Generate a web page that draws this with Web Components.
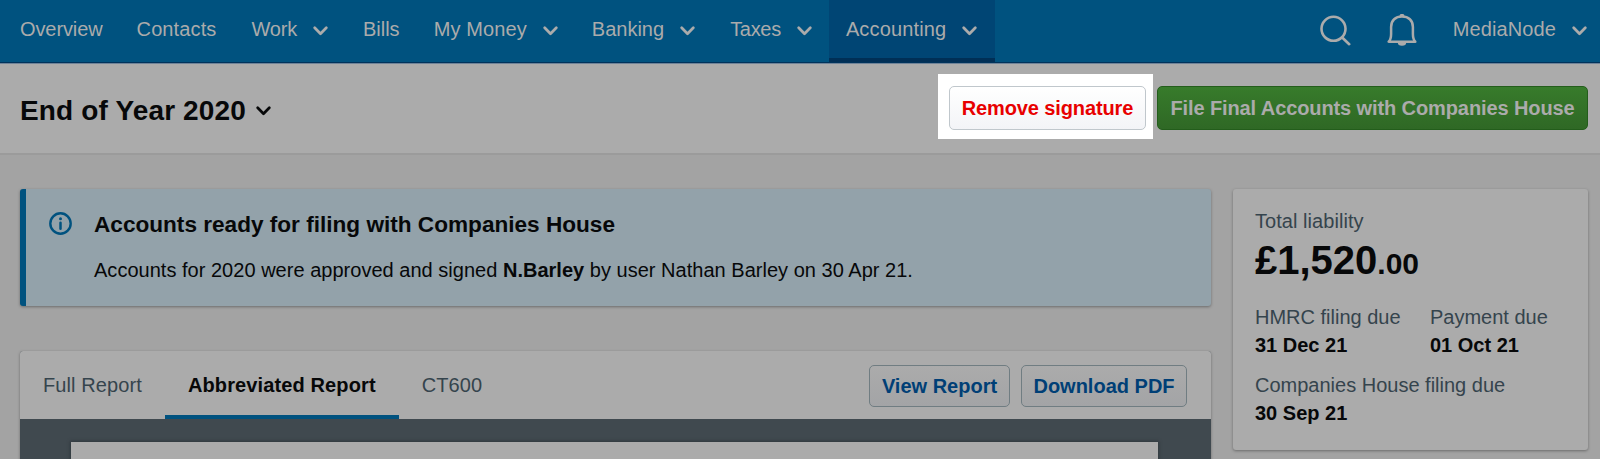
<!DOCTYPE html>
<html lang="en">
<head>
<meta charset="utf-8">
<title>End of Year 2020</title>
<style>
    html, body {
        margin: 0;
        height: 459px;
        overflow: hidden;
        background: #a3a3a3;
        font-family: "Liberation Sans", Arial, sans-serif;
        font-size: 20px;
        color: #070809;
    }
</style>
</head>
<body>
<accounts-page></accounts-page>

<script>
    class ChevronIcon extends HTMLElement {
        constructor() {
            super();
            this.attachShadow({ mode: 'open' }).innerHTML = `
                <style>
                    :host { display: block; flex: none; width: 15px; height: 10px; }
                    svg { display: block; }
                </style>
                <svg width="15" height="10" viewBox="0 0 15 10" fill="none" stroke="currentColor" stroke-width="2.7" stroke-linecap="round" stroke-linejoin="round">
                    <path d="M1.7 1.7 7.5 7.7 13.3 1.7"/>
                </svg>
            `;
        }
    }

    class NavItem extends HTMLElement {
        constructor() {
            super();
            this.attachShadow({ mode: 'open' }).innerHTML = `
                <style>
                    :host {
                        display: flex;
                        align-items: center;
                        box-sizing: border-box;
                        height: 62px;
                        padding: 0 17px;
                        white-space: nowrap;
                    }
                    :host([active]) {
                        background: #004574;
                        box-shadow: inset 0 -4px #002f56;
                    }
                    span { line-height: 24px; margin-top: -4px; }
                    chevron-icon { margin: 0 0 0 16px; }
                    :host(:not([menu])) chevron-icon { display: none; }
                </style>
                <span><slot></slot></span>
                <chevron-icon></chevron-icon>
            `;
        }
    }

    class NavBar extends HTMLElement {
        constructor() {
            super();
            this.attachShadow({ mode: 'open' }).innerHTML = `
                <style>
                    :host {
                        display: flex;
                        justify-content: space-between;
                        box-sizing: border-box;
                        height: 64px;
                        padding: 0 13px 0 3px;
                        background: #00527f;
                        border-bottom: 1px solid #6f8398;
                        box-shadow: inset 0 -1px #00335b;
                        color: #ababab;
                    }
                    nav, .tools { display: flex; }
                    .tools svg { display: block; margin-top: 14px; }
                    .bell { margin-left: 35px; }
                    slot[name="account"]::slotted(*) { margin-left: 19px; padding-right: 0; }
                </style>
                <nav><slot></slot></nav>
                <div class="tools">
                    <svg width="32" height="32" viewBox="0 0 32 32" fill="none" stroke="currentColor" stroke-width="2.6" stroke-linecap="round">
                        <circle cx="13.5" cy="14.8" r="12"/>
                        <path d="m22.2 23.5 7 6.7"/>
                    </svg>
                    <svg class="bell" width="30" height="32" viewBox="0 0 30 32" fill="none" stroke="currentColor" stroke-width="2.5" stroke-linejoin="round" stroke-linecap="round">
                        <path d="M1.700 27.700H28.300C26.300 25.700 25.900 23.500 25.900 20V13C25.900 6.200 21.500 2.600 15 2.600S4.100 6.200 4.100 13v7c0 3.500-.4 5.700-2.400 7.700z"/>
                        <path d="M10.800 28.500a4.200 3.300 0 0 0 8.400 0zM12.600 2a2.400 2.200 0 0 1 4.800 0z" fill="currentColor" stroke="none"/>
                    </svg>
                    <slot name="account"></slot>
                </div>
            `;
        }
    }

    class UiButton extends HTMLElement {
        constructor() {
            super();
            this.attachShadow({ mode: 'open' }).innerHTML = `
                <style>
                    :host {
                        display: flex;
                        flex: none;
                        align-items: center;
                        justify-content: center;
                        box-sizing: border-box;
                        height: 42px;
                        border: 1px solid #707d82;
                        border-radius: 5px;
                        background: linear-gradient(#ababab, #a3a4a6);
                        color: #003f76;
                        font-weight: bold;
                        line-height: 24px;
                        white-space: nowrap;
                    }
                    :host([kind="danger"]) {
                        height: 44px;
                        border-color: #c0c7cc;
                        background: linear-gradient(#fff, #f3f4f7);
                        color: #e80000;
                        letter-spacing: -0.12px;
                    }
                    :host([kind="primary"]) {
                        height: 44px;
                        border-color: #235d1b;
                        background: linear-gradient(#377b2b, #2f6825);
                        color: #ababab;
                        letter-spacing: -0.1px;
                    }
                </style>
                <slot></slot>
            `;
        }
    }

    class PageHeader extends HTMLElement {
        constructor() {
            super();
            this.attachShadow({ mode: 'open' }).innerHTML = `
                <style>
                    :host {
                        display: flex;
                        justify-content: space-between;
                        box-sizing: border-box;
                        height: 91px;
                        padding: 0 12px 0 20px;
                        background: #ababab;
                        border-bottom: 2px solid #9b9b9b;
                    }
                    .title { display: flex; }
                    h1 { margin: 31px 0 0; font-size: 28px; line-height: 32px; white-space: nowrap; letter-spacing: 0.15px; }
                    chevron-icon { margin: 42px 0 0 10px; }
                    .actions { display: flex; align-items: flex-start; }
                    .spotlight {
                        display: flex;
                        box-sizing: border-box;
                        width: 215px;
                        height: 65px;
                        margin: 10px 4px 0 0;
                        padding: 12px 7px 0 11px;
                        background: #fff;
                    }
                    .file { margin-top: 22px; }
                    slot[name="remove"]::slotted(*) { width: 197px; }
                    slot[name="file"]::slotted(*) { width: 431px; }
                </style>
                <div class="title">
                    <h1><slot></slot></h1>
                    <chevron-icon></chevron-icon>
                </div>
                <div class="actions">
                    <div class="spotlight"><slot name="remove"></slot></div>
                    <div class="file"><slot name="file"></slot></div>
                </div>
            `;
        }
    }

    class InfoAlert extends HTMLElement {
        constructor() {
            super();
            this.attachShadow({ mode: 'open' }).innerHTML = `
                <style>
                    :host {
                        display: flex;
                        box-sizing: border-box;
                        height: 117px;
                        padding-left: 23px;
                        background: #93a2aa;
                        border-left: 6px solid #00527f;
                        border-radius: 3px;
                        box-shadow: 0 1px 3px rgba(0, 0, 0, .35);
                    }
                    svg { flex: none; margin: 23px 22px 0 0; color: #00527f; }
                    h2 { margin: 22px 0 0; font-size: 22.6px; line-height: 28px; white-space: nowrap; }
                    p { margin: 18px 0 0; line-height: 26px; white-space: nowrap; letter-spacing: 0.02px; }
                </style>
                <svg width="23" height="23" viewBox="0 0 23 23" fill="none" stroke="currentColor">
                    <circle cx="11.5" cy="11.5" r="10.2" stroke-width="2.4"/>
                    <path d="M11.5 10.7v6" stroke-width="2.5" stroke-linecap="round"/>
                    <circle cx="11.5" cy="6.7" r="1.5" fill="currentColor" stroke="none"/>
                </svg>
                <div>
                    <h2><slot name="heading"></slot></h2>
                    <p><slot></slot></p>
                </div>
            `;
        }
    }

    class ReportTab extends HTMLElement {
        constructor() {
            super();
            this.attachShadow({ mode: 'open' }).innerHTML = `
                <style>
                    :host {
                        display: block;
                        box-sizing: border-box;
                        height: 68px;
                        padding: 22px 23px 0;
                        line-height: 24px;
                        color: #35444d;
                        letter-spacing: 0.1px;
                        white-space: nowrap;
                    }
                    :host([active]) {
                        border-bottom: 4px solid #00527f;
                        color: #070809;
                        font-weight: bold;
                        letter-spacing: 0.12px;
                    }
                </style>
                <slot></slot>
            `;
        }
    }

    class ReportPanel extends HTMLElement {
        constructor() {
            super();
            this.attachShadow({ mode: 'open' }).innerHTML = `
                <style>
                    :host {
                        display: block;
                        margin-top: 45px;
                        background: #40494f;
                        border-radius: 3px;
                        box-shadow: 0 1px 3px rgba(0, 0, 0, .35);
                    }
                    header {
                        display: flex;
                        justify-content: space-between;
                        height: 68px;
                        padding-right: 24px;
                        background: #ababab;
                        border-radius: 3px 3px 0 0;
                    }
                    .tabs { display: flex; }
                    .buttons { display: flex; gap: 11px; padding-top: 14px; }
                    .viewer { padding: 23px 53px 0 51px; }
                    .paper { height: 60px; background: #ababab; box-shadow: 0 0 3px 1px #2f383e; }
                </style>
                <header>
                    <div class="tabs"><slot></slot></div>
                    <div class="buttons"><slot name="button"></slot></div>
                </header>
                <div class="viewer"><div class="paper"></div></div>
            `;
        }
    }

    class DueDate extends HTMLElement {
        constructor() {
            super();
            this.attachShadow({ mode: 'open' }).innerHTML = `
                <style>
                    :host { display: block; line-height: 28px; white-space: nowrap; }
                    .label { color: #35444d; }
                    .date { font-weight: bold; }
                </style>
                <div class="label"><slot></slot></div>
                <div class="date"><slot name="date"></slot></div>
            `;
        }
    }

    class LiabilityCard extends HTMLElement {
        constructor() {
            super();
            this.attachShadow({ mode: 'open' }).innerHTML = `
                <style>
                    :host {
                        display: block;
                        box-sizing: border-box;
                        width: 355px;
                        height: 261px;
                        padding: 18px 22px 0;
                        background: #ababab;
                        border-radius: 3px;
                        box-shadow: 0 1px 3px rgba(0, 0, 0, .35);
                    }
                    .label { color: #35444d; line-height: 28px; letter-spacing: 0.05px; }
                    .total { height: 68px; font-size: 40px; font-weight: bold; line-height: 50px; }
                    .total small { font-size: 30px; }
                    .row { display: grid; grid-template-columns: 175px 1fr; row-gap: 12px; }
                </style>
                <div class="label">Total liability</div>
                <div class="total">£1,520<small>.00</small></div>
                <div class="row"><slot></slot></div>
            `;
        }
    }

    class AccountsPage extends HTMLElement {
        constructor() {
            super();
            this.attachShadow({ mode: 'open' }).innerHTML = `
                <style>
                    :host { display: block; height: 459px; overflow: hidden; }
                    main { display: flex; align-items: flex-start; gap: 22px; padding: 34px 12px 0 20px; }
                    .content { width: 1191px; flex: none; }
                </style>
                <nav-bar>
                    <nav-item style="letter-spacing: -.1px">Overview</nav-item>
                    <nav-item style="letter-spacing: .12px">Contacts</nav-item>
                    <nav-item menu style="margin-left: 1px; letter-spacing: -.2px">Work</nav-item>
                    <nav-item style="margin-left: 1px">Bills</nav-item>
                    <nav-item menu style="letter-spacing: .12px">My Money</nav-item>
                    <nav-item menu>Banking</nav-item>
                    <nav-item menu style="margin-left: 1px; letter-spacing: -.3px">Taxes</nav-item>
                    <nav-item menu active style="padding-right: 18px; letter-spacing: .15px">Accounting</nav-item>
                    <nav-item slot="account" menu style="letter-spacing: .1px">MediaNode</nav-item>
                </nav-bar>
                <page-header>
                    End of Year 2020
                    <ui-button slot="remove" kind="danger">Remove signature</ui-button>
                    <ui-button slot="file" kind="primary">File Final Accounts with Companies House</ui-button>
                </page-header>
                <main>
                    <div class="content">
                        <info-alert>
                            <span slot="heading">Accounts ready for filing with Companies House</span>
                            Accounts for 2020 were approved and signed <b>N.Barley</b> by user Nathan Barley on 30 Apr 21.
                        </info-alert>
                        <report-panel>
                            <report-tab>Full Report</report-tab>
                            <report-tab active>Abbreviated Report</report-tab>
                            <report-tab>CT600</report-tab>
                            <ui-button slot="button" style="width: 141px">View Report</ui-button>
                            <ui-button slot="button" style="width: 166px">Download PDF</ui-button>
                        </report-panel>
                    </div>
                    <liability-card>
                        <due-date>HMRC filing due<span slot="date">31 Dec 21</span></due-date>
                        <due-date>Payment due<span slot="date">01 Oct 21</span></due-date>
                        <due-date style="grid-column: span 2">Companies House filing due<span slot="date">30 Sep 21</span></due-date>
                    </liability-card>
                </main>
            `;
        }
    }

    customElements.define('chevron-icon', ChevronIcon);
    customElements.define('nav-item', NavItem);
    customElements.define('nav-bar', NavBar);
    customElements.define('ui-button', UiButton);
    customElements.define('page-header', PageHeader);
    customElements.define('info-alert', InfoAlert);
    customElements.define('report-tab', ReportTab);
    customElements.define('report-panel', ReportPanel);
    customElements.define('due-date', DueDate);
    customElements.define('liability-card', LiabilityCard);
    customElements.define('accounts-page', AccountsPage);
</script>
</body>
</html>
